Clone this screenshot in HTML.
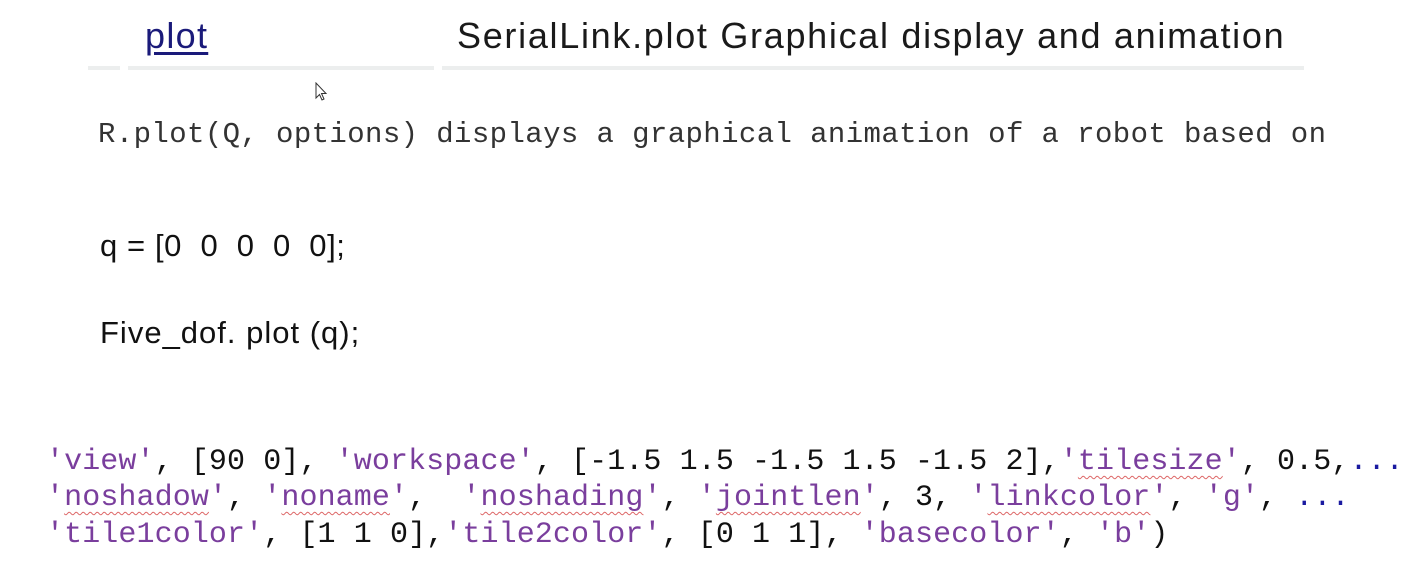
<!DOCTYPE html>
<html><head><meta charset="utf-8"><style>
body{margin:0;width:1408px;height:572px;background:#fff;position:relative;overflow:hidden;font-family:"Liberation Sans",Arial,sans-serif}
.a{position:absolute;white-space:pre;line-height:1}
.m{font-family:"Liberation Mono",monospace;font-size:30px;color:#111;letter-spacing:0.1px}
.s{color:#7a3e9d}
.u{text-decoration:underline wavy #d66;text-decoration-thickness:1px;text-underline-offset:6px}
.line{position:absolute;top:66px;height:4px;background:#eceeee}
</style></head><body>
<div class="line" style="left:88px;width:32px"></div>
<div class="line" style="left:128px;width:306px"></div>
<div class="line" style="left:442px;width:862px"></div>
<div class="a" style="left:145px;top:18px;font-size:36px;letter-spacing:1.3px;color:#1a1a7a;text-decoration:underline;text-underline-offset:4px;">plot</div>
<div class="a" style="left:457px;top:18px;font-size:36px;color:#1a1a1a;letter-spacing:1.7px">SerialLink.plot Graphical display and animation</div>
<div class="a" style="left:98px;top:120px;font-family:'Liberation Mono',monospace;font-size:29px;color:#333;letter-spacing:0.4px">R.plot(Q, options) displays a graphical animation of a robot based on</div>
<div class="a" style="left:100px;top:230px;font-size:31px;color:#111;letter-spacing:0.6px">q = [0&nbsp; 0&nbsp; 0&nbsp; 0&nbsp; 0];</div>
<div class="a" style="left:100px;top:317px;font-size:31px;color:#111;letter-spacing:1px">Five_dof. plot (q);</div>
<div class="a m" style="left:46px;top:447px"><span class="s">'view'</span>, [90 0], <span class="s">'workspace'</span>, [-1.5 1.5 -1.5 1.5 -1.5 2],<span class="s">'<span class="u">tilesize</span>'</span>, 0.5,<span style="color:#1a1aa0">...</span></div>
<div class="a m" style="left:46px;top:483px"><span class="s">'<span class="u">noshadow</span>'</span>, <span class="s">'<span class="u">noname</span>'</span>,  <span class="s">'<span class="u">noshading</span>'</span>, <span class="s">'<span class="u">jointlen</span>'</span>, 3, <span class="s">'<span class="u">linkcolor</span>'</span>, <span class="s">'g'</span>, <span style="color:#1a1aa0">...</span></div>
<div class="a m" style="left:46px;top:520px"><span class="s">'tile1color'</span>, [1 1 0],<span class="s">'tile2color'</span>, [0 1 1], <span class="s">'basecolor'</span>, <span class="s">'b'</span>)</div>
<svg class="a" style="left:315px;top:82px" width="14" height="20" viewBox="0 0 14 20"><path d="M1 1 L1 16 L4.5 12.5 L7 18 L9 17 L6.5 11.5 L11 11.5 Z" fill="#fff" stroke="#333" stroke-width="1"/></svg>
</body></html>
